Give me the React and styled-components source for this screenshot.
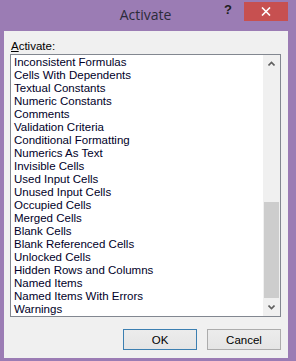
import React from 'react';
import styled, { createGlobalStyle } from 'styled-components';

const Global = createGlobalStyle`
  html, body { margin: 0; padding: 0; background: #9b7cb4; }
  body { width: 296px; height: 361px; overflow: hidden; }
`;

const Window = styled.div`
  width: 296px;
  height: 361px;
  background: #9b7cb4;
  display: flex;
  flex-direction: column;
  box-sizing: border-box;
  padding: 0 8px 3px 4px;
`;

const TitleBar = styled.div`
  height: 31px;
  display: flex;
  align-items: flex-start;
  margin-right: -8px;
  margin-left: -4px;
`;

const Title = styled.div`
  flex: 1;
  text-align: center;
  font-family: "Open Sans", sans-serif;
  font-size: 14px;
  color: #2b2b3a;
  padding-top: 5px;
  padding-left: 73px;
`;

const Help = styled.div`
  width: 20px;
  font-family: "Liberation Sans", sans-serif;
  font-weight: bold;
  font-size: 13px;
  color: #1e1e1e;
  padding-top: 2px;
  margin-right: 6px;
  text-align: center;
`;

const Close = styled.div`
  width: 44px;
  height: 19px;
  margin-top: 2px;
  margin-right: 8px;
  background: #c75050;
  display: flex;
  align-items: center;
  justify-content: center;
`;

const Body = styled.div`
  flex: 1;
  background: #f0f0f0;
  display: flex;
  flex-direction: column;
  padding: 8px 7px 0 6px;
  font-family: "Liberation Sans", Tahoma, sans-serif;
  font-size: 11.5px;
  color: #000;
`;

const Label = styled.div`
  height: 14px;
  padding-top: 1px;
  line-height: 13px;
  padding-left: 1px;
  u { text-decoration: underline; text-underline-offset: 1px; }
`;

const ListBox = styled.div`
  height: 263px;
  box-sizing: border-box;
  border: 1px solid #828790;
  background: #fff;
  display: flex;
`;

const Items = styled.ul`
  flex: 1;
  list-style: none;
  margin: 0;
  padding: 1px 0 0 3px;
  overflow: hidden;
`;

const Item = styled.li`
  height: 13px;
  line-height: 13px;
  white-space: nowrap;
  color: #000028;
`;

const ScrollBar = styled.div`
  width: 17px;
  background: #f0f0f0;
  display: flex;
  flex-direction: column;
`;

const Arrow = styled.div`
  height: 17px;
  display: flex;
  align-items: center;
  justify-content: center;
`;

const Track = styled.div`
  flex: 1;
  display: flex;
  flex-direction: column;
  padding: 0 1px;
`;

const Thumb = styled.div`
  margin-top: ${(p) => p.top}px;
  height: ${(p) => p.size}px;
  background: #cdcdcd;
`;

const Buttons = styled.div`
  display: flex;
  justify-content: flex-end;
  gap: 10px;
  margin-top: 12px;
`;

const Button = styled.div`
  width: 74px;
  height: 21px;
  box-sizing: border-box;
  border: 1px solid ${(p) => (p.primary ? '#3c7fb1' : '#acacac')};
  background: linear-gradient(#ececec, #e5e5e5);
  display: flex;
  align-items: center;
  justify-content: center;
  font-family: "Liberation Sans", Tahoma, sans-serif;
  font-size: 11.5px;
  color: #000;
`;

const items = [
  'Inconsistent Formulas',
  'Cells With Dependents',
  'Textual Constants',
  'Numeric Constants',
  'Comments',
  'Validation Criteria',
  'Conditional Formatting',
  'Numerics As Text',
  'Invisible Cells',
  'Used Input Cells',
  'Unused Input Cells',
  'Occupied Cells',
  'Merged Cells',
  'Blank Cells',
  'Blank Referenced Cells',
  'Unlocked Cells',
  'Hidden Rows and Columns',
  'Named Items',
  'Named Items With Errors',
  'Warnings',
];

const Chevron = ({ up }) => (
  <svg width="7" height="5" viewBox="0 0 7 5">
    <path
      d={up ? 'M0.5 4.5 L3.5 1.5 L6.5 4.5' : 'M0.5 0.5 L3.5 3.5 L6.5 0.5'}
      fill="none"
      stroke="#606060"
      strokeWidth="1.6"
    />
  </svg>
);

export default function App() {
  return (
    <>
      <Global />
      <Window>
        <TitleBar>
          <Title>Activate</Title>
          <Help>?</Help>
          <Close>
            <svg width="10" height="9" viewBox="0 0 10 9">
              <path d="M1 0.5 L9 8.5 M9 0.5 L1 8.5" stroke="#fff" strokeWidth="1.6" />
            </svg>
          </Close>
        </TitleBar>
        <Body>
          <Label>
            <u>A</u>ctivate:
          </Label>
          <ListBox>
            <Items>
              {items.map((t) => (
                <Item key={t}>{t}</Item>
              ))}
            </Items>
            <ScrollBar>
              <Arrow><Chevron up /></Arrow>
              <Track>
                <Thumb top={130} size={96} />
              </Track>
              <Arrow><Chevron /></Arrow>
            </ScrollBar>
          </ListBox>
          <Buttons>
            <Button primary>OK</Button>
            <Button>Cancel</Button>
          </Buttons>
        </Body>
      </Window>
    </>
  );
}
